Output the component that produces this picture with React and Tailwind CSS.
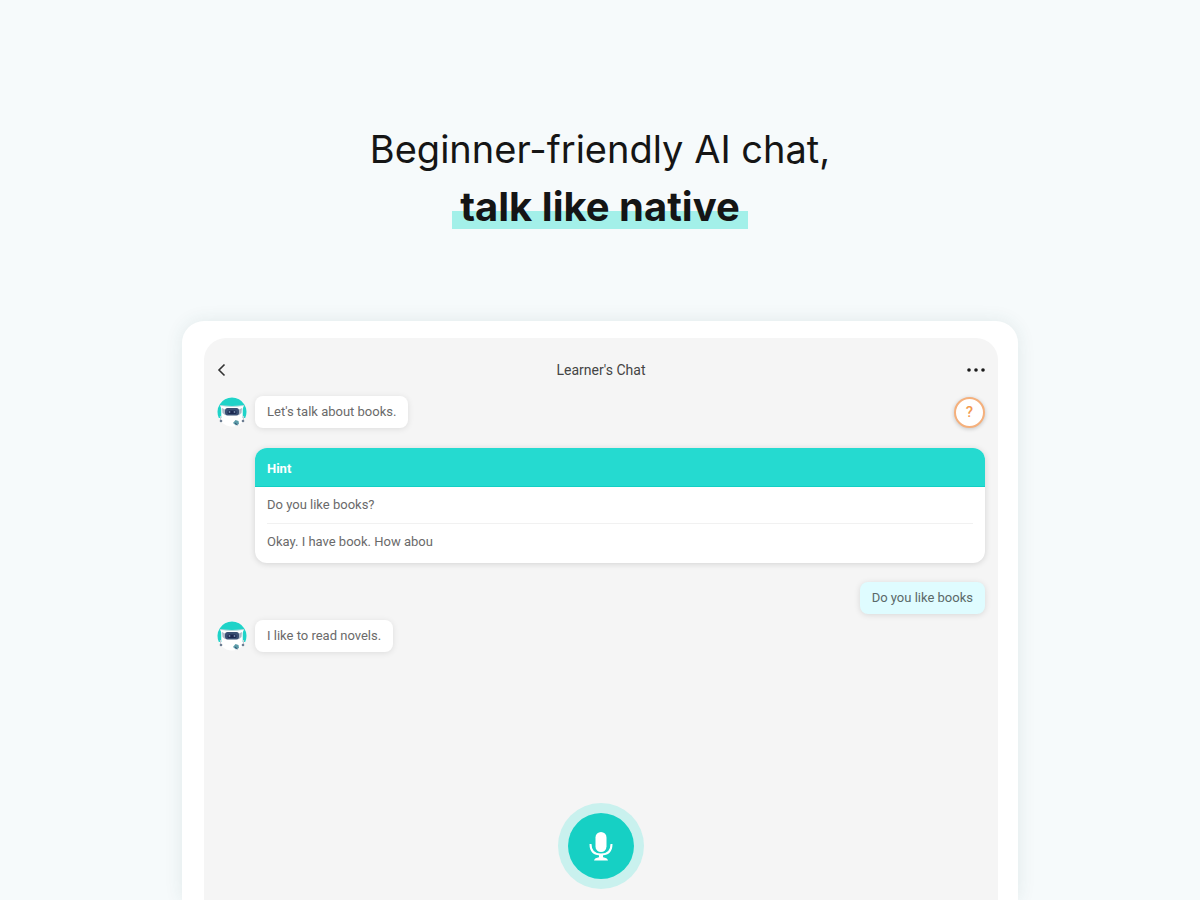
import React from 'react';

const hints = ['Do you like books?', 'Okay. I have book. How abou'];

const BotAvatar = () => (
  <svg viewBox="0 0 30 30" className="w-[30px] h-[30px] shrink-0" role="img" aria-label="Bot">
    <circle cx="15" cy="15" r="14.5" fill="#fff" />
    <path d="M1.800 21 A14.5 14.5 0 1 1 28.200 21 L25.500 21 V10 H4.500 V21 Z" fill="#1fd3c8" />
    <path d="M3 8.500 Q15 10.500 27 8.500 L25.500 12 V20 Q25 26 15 26 Q5 26 4.500 20 V12 Z" fill="#fff" />
    <path d="M3 8.500 Q15 10.500 27 8.500" stroke="#c5d3dc" strokeWidth="0.8" fill="none" />
    <path d="M5 11 L8 12.500 V18 L5.500 16 Z M25 11 L22 12.500 V18 L24.500 16 Z" fill="#aeb9c8" />
    <path d="M3.500 19 V23 M26.500 19 V23" stroke="#c5ccd4" strokeWidth="1.2" />
    <rect x="8" y="11" width="14" height="7.500" rx="2.500" fill="#3a4f73" />
    <rect x="10.500" y="13.500" width="9" height="3.500" rx="1.500" fill="#1c2850" />
    <circle cx="12.500" cy="15" r="0.900" fill="#7489a8" />
    <circle cx="17.500" cy="15" r="0.900" fill="#7489a8" />
    <circle cx="4" cy="24" r="1.300" fill="#6d7d92" />
    <circle cx="26" cy="24" r="1.300" fill="#6d7d92" />
    <path d="M18.500 23 L21.500 24 L22 27 L19 28.500 L16 26 Z" fill="#5b9ba8" />
    <path d="M18 26 L20.500 28" stroke="#3a4f73" strokeWidth="1" />
  </svg>
);

const BotMessage = ({ children }) => (
  <div className="flex items-center gap-2">
    <BotAvatar />
    <p className="rounded-lg bg-white px-3 py-1.5 text-[13px] leading-5 text-[#6a6a6a] shadow-[0_1px_6px_rgba(0,0,0,0.1)]">
      {children}
    </p>
  </div>
);

const ChatHeader = () => (
  <header className="flex items-center justify-between">
    <button type="button" aria-label="Back" className="flex h-6 w-8 items-center cursor-pointer">
      <svg viewBox="0 0 10 14" className="w-[10px] h-[14px]" fill="none" stroke="#333" strokeWidth="1.6">
        <path d="M7.500 1.500 L2 7 L7.500 12.500" />
      </svg>
    </button>
    <h2 className="text-[14px] leading-5 text-[#444]">Learner's Chat</h2>
    <button type="button" aria-label="More options" className="flex h-6 w-8 items-center justify-end cursor-pointer">
      <svg viewBox="0 0 18 4" className="w-[18px] h-1" fill="#1a1a1a">
        <circle cx="2" cy="2" r="1.800" />
        <circle cx="9" cy="2" r="1.800" />
        <circle cx="16" cy="2" r="1.800" />
      </svg>
    </button>
  </header>
);

const HintCard = () => (
  <section className="ml-[38px] mt-5 overflow-hidden rounded-xl bg-white shadow-[0_1px_6px_rgba(0,0,0,0.14)]">
    <h3 className="border-b border-[#12cfc4] bg-[#25dad0] px-3 pt-3 pb-2 text-[13px] leading-[18px] font-bold text-white">Hint</h3>
    <ul className="px-3 pb-[3px] text-[13px] leading-[18px] text-[#6a6a6a] divide-y divide-[#f1f1f1]">
      {hints.map((hint) => (
        <li key={hint} className="py-[9px]">{hint}</li>
      ))}
    </ul>
  </section>
);

const MicButton = () => (
  <button
    type="button"
    aria-label="Speak"
    className="flex h-[86px] w-[86px] items-center justify-center rounded-full bg-[#c9f1ee] cursor-pointer"
  >
    <span className="flex h-[66px] w-[66px] items-center justify-center rounded-full bg-[#16d0c4]">
      <svg viewBox="0 0 24 30" className="w-6 h-[30px]" fill="none">
        <rect x="6.500" y="1" width="11" height="20" rx="5.500" fill="#fff" />
        <path d="M1.500 13 C1.500 20 5.500 23.500 12 23.500 C18.500 23.500 22.500 20 22.500 13" stroke="#fff" strokeWidth="2" />
        <path d="M12 23 V27" stroke="#fff" strokeWidth="4" />
        <path d="M5 29.500 Q5.500 27 9 26.500 L12 25.500 L15 26.500 Q18.500 27 19 29.500 Z" fill="#fff" />
      </svg>
    </span>
  </button>
);

export default function App() {
  return (
    <div className="flex min-h-screen flex-col items-center overflow-hidden bg-[#f6fafb] px-4 font-['Roboto',sans-serif]">
      <h1 className="flex flex-col items-center pt-[121px] text-center font-['Inter',sans-serif] leading-[57px] text-[#151515]">
        <span className="text-[38px]">Beginner-friendly AI chat,</span>
        <span className="bg-[linear-gradient(#a3f0e9,#a3f0e9)] bg-[length:100%_18px] bg-[position:0_33px] bg-no-repeat px-2 text-[40px] font-bold">
          talk like native
        </span>
      </h1>

      <main className="mt-[86px] flex w-full max-w-[836px] flex-1 flex-col rounded-t-[22px] bg-white pt-[17px] pr-5 pl-[22px] shadow-[0_0_18px_rgba(40,90,90,0.1)]">
        <div className="flex flex-1 flex-col rounded-t-[22px] bg-[#f5f5f5] px-[13px] pt-5 pb-[11px]">
          <ChatHeader />

          <div className="mt-[14px] flex items-center justify-between">
            <BotMessage>Let's talk about books.</BotMessage>
            <button
              type="button"
              aria-label="Show hint"
              className="flex h-[31px] w-[31px] items-center justify-center rounded-full border-2 border-[#f5b07c] bg-white text-[15px] leading-5 font-medium text-[#f39a50] shadow-[0_1px_4px_rgba(0,0,0,0.2)] cursor-pointer"
            >
              ?
            </button>
          </div>

          <HintCard />

          <p className="mt-[19px] self-end rounded-lg bg-[#dffcff] px-3 py-1.5 text-[13px] leading-5 text-[#5a6969] shadow-[0_1px_6px_rgba(0,0,0,0.12)]">
            Do you like books
          </p>

          <div className="mt-1.5">
            <BotMessage>I like to read novels.</BotMessage>
          </div>

          <div className="mt-auto flex justify-center">
            <MicButton />
          </div>
        </div>
      </main>
    </div>
  );
}
